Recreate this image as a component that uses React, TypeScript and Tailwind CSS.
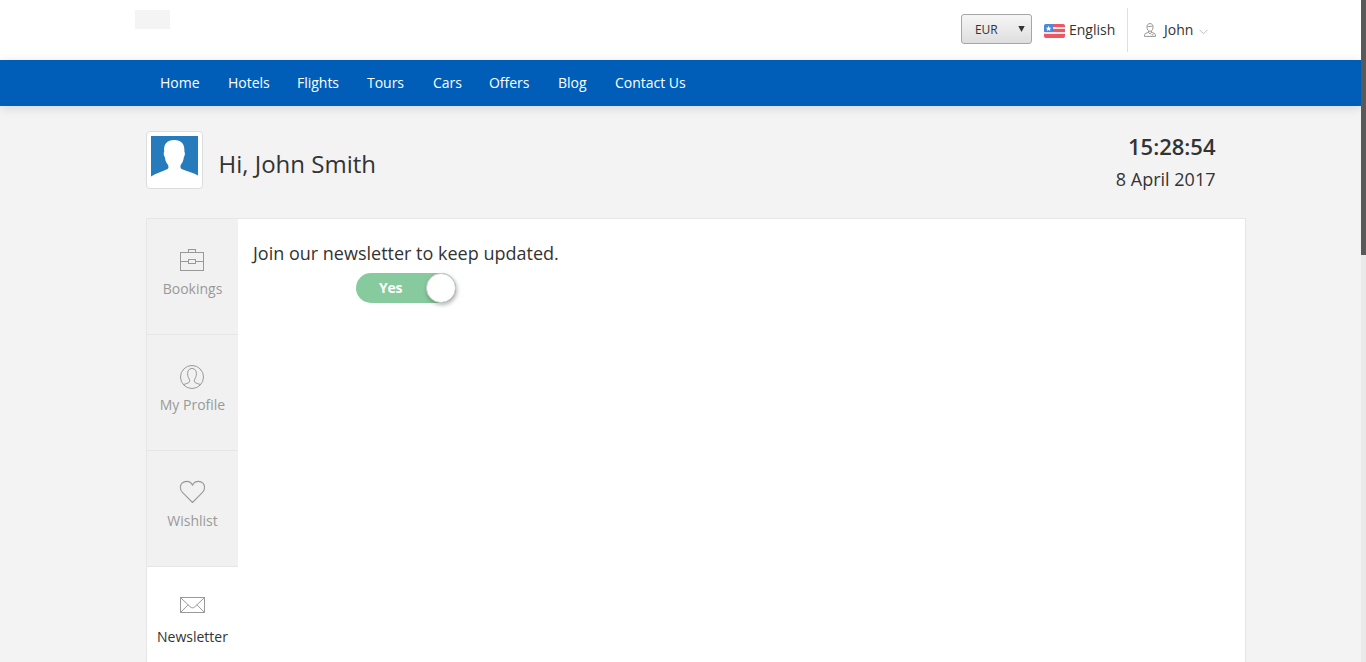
import type { ReactNode } from 'react';

const navItems = [
  { label: 'Home', width: 'w-[40px]' },
  { label: 'Hotels', width: 'w-[41px]' },
  { label: 'Flights', width: 'w-[42px]' },
  { label: 'Tours', width: 'w-[38px]' },
  { label: 'Cars', width: 'w-[28px]' },
  { label: 'Offers', width: 'w-[41px]' },
  { label: 'Blog', width: 'w-[29px]' },
  { label: 'Contact Us', width: 'w-[72px]' },
];

function BriefcaseIcon() {
  return (
    <svg width="26" height="26" viewBox="0 0 26 26" fill="none" stroke="#999" shapeRendering="crispEdges">
      <path d="M1.5 5.500h23v18h-23zM9.500 5.500v-3h7v3M1.500 14.500h8M16.500 14.500h8M9.500 12.500h7v4h-7z" />
    </svg>
  );
}

function ProfileIcon() {
  return (
    <svg width="26" height="26" viewBox="0 0 26 26" fill="none" stroke="#999">
      <circle cx="13" cy="14" r="11.5" />
      <path d="M4.500 21.700c2.500-1.100 4.500-1.500 5.600-2.300.6-.5.700-2.300.2-3.200-1.200-1.800-1.700-3.500-1.700-5.500 0-3.200 1.500-5.200 4.400-5.200s4.400 2 4.400 5.200c0 2-.5 3.700-1.700 5.500-.5.900-.4 2.700.2 3.200 1.100.8 3.100 1.200 5.600 2.300" />
    </svg>
  );
}

function HeartIcon() {
  return (
    <svg width="26" height="26" viewBox="0 0 26 26" fill="none" stroke="#999" strokeWidth="1.100" strokeLinejoin="round">
      <path d="M13.500 23.500 3.200 13.100C.7 10.500.9 6.300 3 4.200c2.700-2.600 7.300-2.400 9.400.2l1.100 1.900 1.100-1.900c2.100-2.600 6.700-2.800 9.300-.2 2.200 2.200 2.200 6.300-.2 8.900z" />
    </svg>
  );
}

function MailIcon() {
  return (
    <svg width="26" height="26" viewBox="0 0 26 26" fill="none" stroke="#999">
      <path d="M1.500 5.500h24v15h-24zM1.500 5.500l9.600 9.200c1.400 1.500 3.400 1.500 4.800 0l9.600-9.200M1.500 20.500l7.500-7.600M25.500 20.500 18 12.900" />
    </svg>
  );
}

function FlagIcon() {
  return (
    <svg width="21" height="14" viewBox="0 0 21 14" className="mt-[2px] overflow-hidden rounded-[2px]">
      <path fill="#e6e7ea" d="M0 0h21v14H0z" />
      <path fill="#f05563" d="M9 0h12v3H9zM9 5h12v3H9zM0 10h21v4H0z" />
      <path fill="#4a89dc" d="M0 0h9v8H0z" />
      <path fill="#fff" d="m4.600 1.800.8 1.900 2.100.1-1.600 1.300.5 2-1.800-1.100-1.800 1.100.5-2-1.600-1.300 2.100-.1z" />
    </svg>
  );
}

function UserIcon() {
  return (
    <svg width="12" height="14" viewBox="0 0 12 14" fill="none" stroke="#8c8c8c" strokeWidth=".9">
      <path d="M6 .6c-2 0-3 1.200-3 3.400 0 2.400 1.100 4.300 3 4.300S9 6.400 9 4C9 1.800 8 .6 6 .6zM3.200 3.200c2 .5 3.600.4 5.500-.3M4.600 8v1.400L1.200 10.500C.7 11 .5 12 .5 13.400h11c0-1.400-.2-2.400-.7-2.900L7.400 9.400V8M4.600 9.400 6 11l1.400-1.600M7.500 11.800h2" />
    </svg>
  );
}

function Avatar() {
  return (
    <div className="h-[58px] w-[57px] rounded-[4px] border border-[#ddd] bg-white p-1">
      <svg width="47" height="48" viewBox="0 0 47 48">
        <path fill="#267bbd" d="M0 0h47v39.500c-5-3-11.500-4.300-16.500-6.500-1.500-1-1.300-3.500-.2-5 1.600-2 2.300-4.500 2.600-7 1.200-1.600 1.300-4 .5-5.500C33.800 8 30.500 4 23.200 4S12.500 8 13.200 15.500c-.8 1.500-.6 4 .6 5.500.3 2.500 1 5 2.600 7 1.100 1.500 1.700 4 .2 5-5 2.200-11.600 4.500-16.600 7.500z" />
      </svg>
    </div>
  );
}

function Tab({ icon, label, active = false }: { icon: ReactNode; label: string; active?: boolean }) {
  return (
    <a
      className={
        active
          ? 'flex h-[116px] flex-col items-center bg-white pt-[25px] text-[#333]'
          : 'flex h-[116px] flex-col items-center border-b border-[#e6e6e6] bg-[#f1f1f1] pt-[28px] text-[#999]'
      }
    >
      <span className="mr-px pr-px">{icon}</span>
      <span className={active ? 'mt-[9px] text-sm leading-5' : 'mt-[6px] text-sm leading-5'}>{label}</span>
    </a>
  );
}

export default function App() {
  return (
    <div className="flex h-[662px] w-[1366px] overflow-hidden bg-[#f3f3f3] font-['Open_Sans',sans-serif] text-sm text-[#333]">
      <div className="flex w-[1361px] flex-col">
        <header className="flex h-[60px] shrink-0 bg-white pl-[135px]">
          <div className="mt-[10px] h-[19px] w-[35px] bg-[#f4f4f4]" />
          <div className="ml-[791px] mt-[14px] flex h-[30px] w-[71px] items-center justify-between rounded-[3px] border border-[#a6a6a6] bg-linear-to-b from-[#f6f6f6] to-[#dedede] pl-[13px] pr-[6px] text-xs">
            <span className="pt-[2px] tracking-[-0.1px]">EUR</span>
            <svg width="7" height="6" viewBox="0 0 7 6" className="-mt-px">
              <path fill="#333" d="M.3 0h6.400L3.500 6z" />
            </svg>
          </div>
          <div className="mt-[8px] flex h-[44px] w-[96px] items-center border-r border-[#e0e0e0] pl-[12px]">
            <FlagIcon />
            <span className="ml-[4px]">English</span>
          </div>
          <div className="mt-[8px] flex h-[44px] items-center pl-[16px]">
            <UserIcon />
            <span className="ml-[8px] w-[31px]">John</span>
            <svg width="9" height="6" viewBox="0 0 9 6" className="ml-[4px] mt-[4px]" fill="none" stroke="#bbb">
              <path d="m.5.8 4 4 4-4" />
            </svg>
          </div>
        </header>
        <nav className="flex h-[46px] shrink-0 items-center gap-[28px] bg-[#005eb8] pl-[160px] text-white shadow-[0_2px_10px_rgba(0,0,0,0.12)]">
          {navItems.map((item) => (
            <a key={item.label} className={`${item.width} whitespace-nowrap font-medium tracking-[-0.02px]`}>
              {item.label}
            </a>
          ))}
        </nav>
        <main className="ml-[146px] flex w-[1100px] flex-col">
          <div className="flex h-[112px] shrink-0 pt-[25px]">
            <Avatar />
            <h1 className="ml-[15.5px] mt-[17px] text-2xl leading-8">Hi, John Smith</h1>
            <div className="ml-auto mr-[30.5px] text-right">
              <div className="-mt-px h-[33px] text-[22px] font-semibold leading-8">15:28:54</div>
              <div className="h-8 text-lg leading-8">8 April 2017</div>
            </div>
          </div>
          <section className="flex h-[480px] shrink-0 border border-[#e6e6e6] bg-white">
            <aside className="w-[91px]">
              <Tab icon={<BriefcaseIcon />} label="Bookings" />
              <Tab icon={<ProfileIcon />} label="My Profile" />
              <Tab icon={<HeartIcon />} label="Wishlist" />
              <Tab icon={<MailIcon />} label="Newsletter" active />
            </aside>
            <div className="pl-[15px] pt-[22px]">
              <p className="text-lg leading-6">Join our newsletter to keep updated.</p>
              <div className="ml-[103px] mt-[8px] flex h-[30px] w-[100px] items-center justify-between rounded-full bg-[#87ca9d] pl-[23px]">
                <span className="font-bold tracking-[-0.3px] text-white">Yes</span>
                <span className="size-[30px] rounded-full border border-[#ccc] bg-white shadow-[1px_2px_4px_rgba(0,0,0,0.3)]" />
              </div>
            </div>
          </section>
        </main>
      </div>
      <div className="w-[5px] bg-[#eaeaea]">
        <div className="h-[255px] bg-[#595959]" />
      </div>
    </div>
  );
}
